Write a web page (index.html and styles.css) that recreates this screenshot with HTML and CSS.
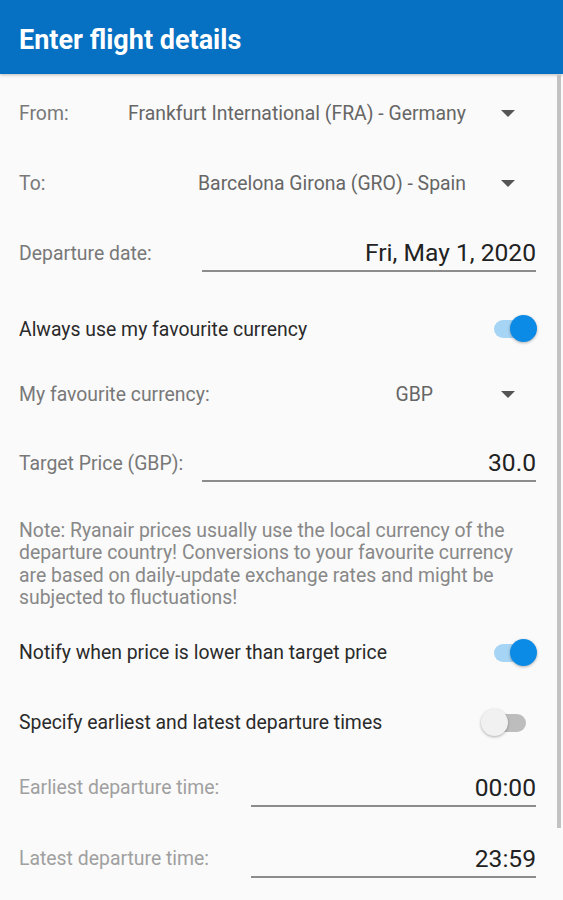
FILE: index.html
```html
<!DOCTYPE html>
<html>
<head>
    <title>Enter flight details</title>
    <link rel="stylesheet" href="styles.css">
</head>
<body>
    <header class="app-bar">
        <h1 class="app-title">Enter flight details</h1>
    </header>
    <main class="form">
        <div class="row">
            <span class="label">From:</span>
            <div class="spinner">
                <span class="spinner-text">Frankfurt International (FRA) - Germany</span>
                <svg class="arrow" width="14" height="7" viewBox="0 0 14 7"><path d="M0 0h14L7 7z"/></svg>
            </div>
        </div>
        <div class="row">
            <span class="label">To:</span>
            <div class="spinner">
                <span class="spinner-text">Barcelona Girona (GRO) - Spain</span>
                <svg class="arrow" width="14" height="7" viewBox="0 0 14 7"><path d="M0 0h14L7 7z"/></svg>
            </div>
        </div>
        <div class="row">
            <span class="label">Departure date:</span>
            <div class="field">Fri, May 1, 2020</div>
        </div>
        <div class="row switch-row first-switch">
            <span class="switch-label">Always use my favourite currency</span>
            <div class="switch on"><div class="track"></div><div class="thumb"></div></div>
        </div>
        <div class="row row-short">
            <span class="label">My favourite currency:</span>
            <div class="spinner spinner-short">
                <span class="spinner-text">GBP</span>
                <svg class="arrow" width="14" height="7" viewBox="0 0 14 7"><path d="M0 0h14L7 7z"/></svg>
            </div>
        </div>
        <div class="row after-short">
            <span class="label">Target Price (GBP):</span>
            <div class="field">30.0</div>
        </div>
        <p class="note">Note: Ryanair prices usually use the local currency of the departure country! Conversions to your favourite currency are based on daily-update exchange rates and might be subjected to fluctuations!</p>
        <div class="row switch-row">
            <span class="switch-label">Notify when price is lower than target price</span>
            <div class="switch on"><div class="track"></div><div class="thumb"></div></div>
        </div>
        <div class="row switch-row">
            <span class="switch-label">Specify earliest and latest departure times</span>
            <div class="switch"><div class="track"></div><div class="thumb"></div></div>
        </div>
        <div class="row row-short">
            <span class="label disabled">Earliest departure time:</span>
            <div class="field field-narrow">00:00</div>
        </div>
        <div class="row last-row">
            <span class="label disabled">Latest departure time:</span>
            <div class="field field-narrow">23:59</div>
        </div>
    </main>
    <div class="scrollbar"></div>
</body>
</html>
```

FILE: styles.css
```css
body {
    margin: 0;
    font-family: Roboto, "Liberation Sans", sans-serif;
    background-color: #fafafa;
    height: 900px;
    overflow: hidden;
}
.app-bar {
    height: 74px;
    background-color: #0670c2;
    display: flex;
    align-items: center;
    box-sizing: border-box;
    padding: 5px 19px 0 19px;
    box-shadow: 0 1px 3px rgba(0, 0, 0, 0.25);
}
.app-title {
    margin: 0;
    color: #fff;
    font-size: 27px;
    line-height: 32px;
    font-weight: 700;
}
.form {
    padding: 4px 27px 0 19px;
}
.row {
    height: 70px;
    display: flex;
    align-items: center;
    justify-content: space-between;
}
.row-short {
    height: 60px;
}
.after-short {
    margin-top: 4px;
}
.last-row {
    margin-top: 6px;
}
.first-switch {
    margin-top: 6px;
}
.label {
    font-size: 19.4px;
    color: #787878;
}
.label.disabled {
    color: #a0a0a0;
}
.spinner {
    display: flex;
    align-items: center;
}
.spinner-text {
    font-size: 19.4px;
    color: #666;
}
.spinner-short .spinner-text {
    margin-right: 33px;
}
.arrow {
    fill: #555;
    margin: 0 21px 0 35px;
}
.field {
    width: 334px;
    height: 34px;
    line-height: 34px;
    text-align: right;
    font-size: 24.6px;
    color: #222;
    border-bottom: 2px solid #8c8c8c;
    margin-top: 2px;
}
.field-narrow {
    width: 285px;
}
.switch-label {
    font-size: 19.4px;
    color: #2a2a2a;
}
.note {
    margin: 22px 0 8px 0;
    font-size: 19.4px;
    line-height: 22.4px;
    color: #888;
}
.switch {
    position: relative;
    width: 56px;
    height: 28px;
    margin-right: -1px;
}
.track {
    position: absolute;
    left: 13px;
    right: 11px;
    top: 5px;
    height: 18px;
    border-radius: 9px;
    background-color: #bdbdbd;
}
.thumb {
    position: absolute;
    left: 0;
    top: 0;
    width: 27px;
    height: 27px;
    border-radius: 50%;
    background-color: #f1f1f1;
    box-shadow: 0 1px 3px rgba(0, 0, 0, 0.3);
}
.switch.on .track {
    background-color: #a6d4f4;
}
.switch.on .thumb {
    left: auto;
    right: 0;
    background-color: #0b8be6;
}
.scrollbar {
    position: absolute;
    top: 75px;
    left: 557px;
    width: 4px;
    height: 753px;
    background-color: #c2c2c2;
}
```
